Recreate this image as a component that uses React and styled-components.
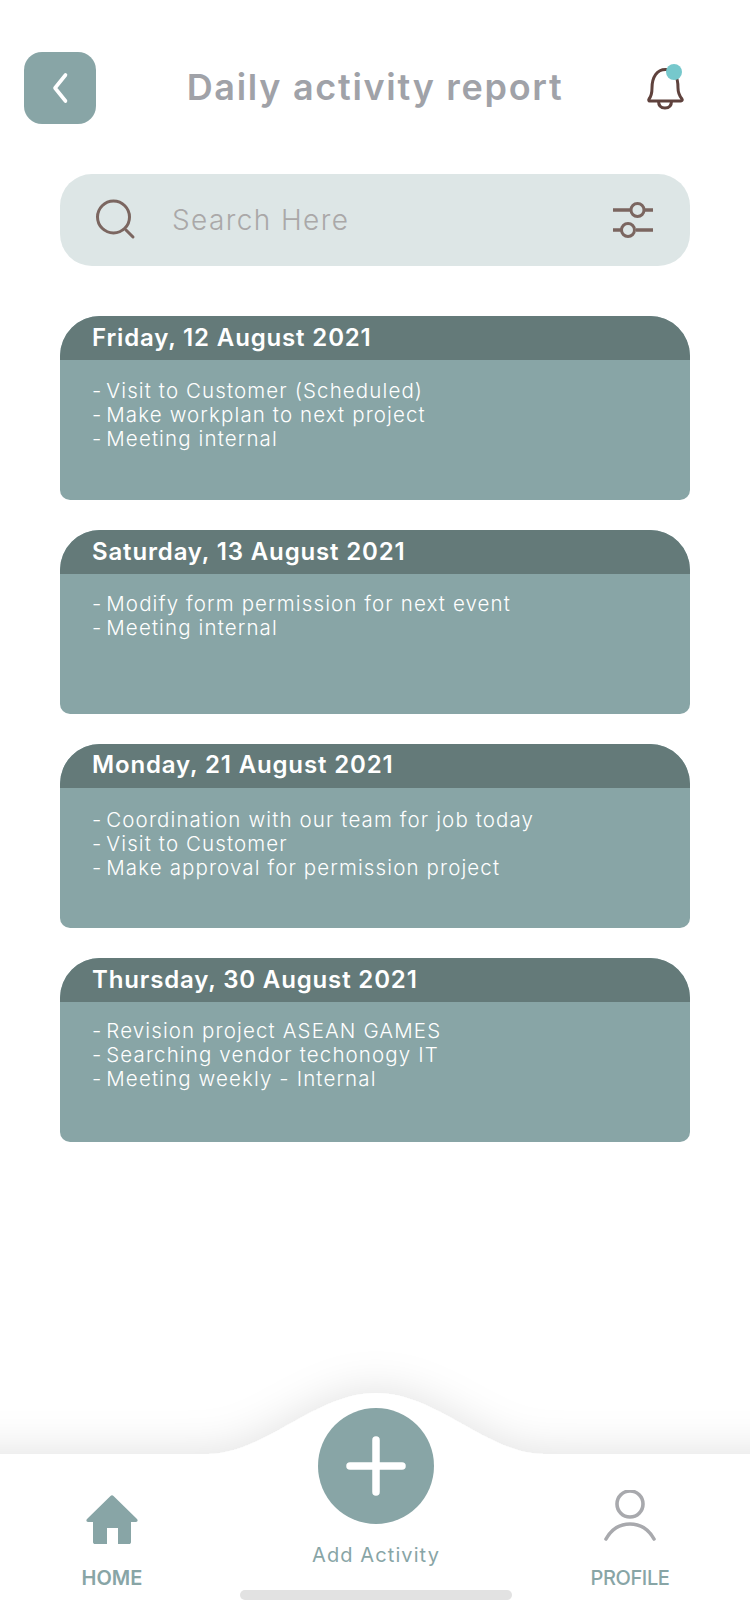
import React from "react";
import styled, { createGlobalStyle } from "styled-components";

const Global = createGlobalStyle`
  html, body { margin: 0; padding: 0; background: #fff; }
  * { box-sizing: border-box; }
`;

const FONT = `Inter, "Open Sans", "Liberation Sans", sans-serif`;
const TEAL = "#88a5a6";

const Page = styled.div`
  width: 750px;
  height: 1624px;
  display: flex;
  flex-direction: column;
  font-family: ${FONT};
  overflow: hidden;
  background: #fff;
`;
const Main = styled.main`
  flex: 1;
  padding-top: 52px;
`;
const Header = styled.header`
  display: grid;
  grid-template-columns: 110px 1fr 110px;
  align-items: center;
  height: 72px;
`;
const BackButton = styled.button`
  width: 72px;
  height: 72px;
  margin-left: 24px;
  border: 0;
  padding: 0;
  border-radius: 18px;
  background: ${TEAL};
  display: flex;
  align-items: center;
  justify-content: center;
`;
const Title = styled.h1`
  margin: 0 0 2px;
  text-align: center;
  font-size: 36px;
  font-weight: 600;
  letter-spacing: 1.7px;
  color: #a0a2a8;
`;
const BellBox = styled.div`
  width: 48px;
  height: 48px;
`;
const Search = styled.div`
  margin: 50px 60px 0;
  height: 92px;
  border-radius: 32px;
  background: #dde6e6;
  display: flex;
  align-items: center;
  padding: 0 36px 0 34px;
`;
const SearchText = styled.span`
  margin-left: 36px;
  flex: 1;
  font-size: 28px;
  font-weight: 300;
  letter-spacing: 1.4px;
  color: #aaa8a8;
`;
const Cards = styled.div`
  margin: 50px 60px 0;
  display: flex;
  flex-direction: column;
  gap: 30px;
`;
const Card = styled.article`
  height: 184px;
  border-radius: 40px 40px 10px 10px;
  background: ${TEAL};
  overflow: hidden;
  color: #fff;
`;
const CardHead = styled.div`
  height: 44px;
  padding: 0 32px ${(p) => p.$lift}px;
  display: flex;
  align-items: center;
  background: #647a79;
  font-size: 24px;
  font-weight: 600;
  letter-spacing: 0.85px;
`;
const CardBody = styled.div`
  padding: ${(p) => p.$top}px 32px 0;
  font-size: 20.5px;
  font-weight: 300;
  line-height: 24px;
  letter-spacing: 1.12px;
`;
const Line = styled.div`
  white-space: pre;
`;
const Dash = styled.span`
  word-spacing: -3px;
`;
const Footer = styled.footer`
  position: relative;
  height: 231px;
  display: grid;
  grid-template-columns: 224px 1fr 224px;
`;
const Wave = styled.svg`
  position: absolute;
  left: 0;
  top: 0;
  width: 750px;
  height: 231px;
  overflow: visible;
`;
const Side = styled.div`
  position: relative;
  padding-top: 102px;
  padding-right: ${(p) => p.$shift}px;
  display: flex;
  flex-direction: column;
  align-items: center;
  color: ${TEAL};
  font-size: 20px;
  font-weight: ${(p) => p.$weight};
  letter-spacing: ${(p) => p.$spacing}px;
`;
const SideIcon = styled.div`
  height: ${(p) => 59 + p.$raise}px;
  margin-top: ${(p) => -p.$raise}px;
  margin-bottom: 12px;
`;
const Center = styled.div`
  position: relative;
  padding: 15px 0 0 2px;
  display: flex;
  flex-direction: column;
  align-items: center;
`;
const AddButton = styled.button`
  width: 116px;
  height: 116px;
  border-radius: 50%;
  border: 0;
  padding: 0;
  background: ${TEAL};
  display: flex;
  align-items: center;
  justify-content: center;
`;
const AddLabel = styled.span`
  margin-top: 19px;
  font-size: 20px;
  letter-spacing: 1.1px;
  color: ${TEAL};
`;
const HomeBar = styled.div`
  width: 272px;
  height: 10px;
  border-radius: 5px;
  margin-top: 23px;
  background: #e2e2e2;
`;

const data = [
  { date: "Friday, 12 August 2021", lift: 2, top: 19, lines: ["Visit to Customer (Scheduled)", "Make workplan to next project", "Meeting internal"] },
  { date: "Saturday, 13 August 2021", lift: 2, top: 18, lines: ["Modify form permission for next event", "Meeting internal"] },
  { date: "Monday, 21 August 2021", lift: 4, top: 20, lines: ["Coordination with our team for job today", "Visit to Customer", "Make approval for permission project"] },
  { date: "Thursday, 30 August 2021", lift: 2, top: 17, lines: ["Revision project ASEAN GAMES", "Searching vendor techonogy IT", "Meeting weekly - Internal"] },
];

export default function App() {
  return (
    <Page>
      <Global />
      <Main>
        <Header>
          <BackButton aria-label="Back">
            <svg width="20" height="32" viewBox="0 0 20 32" fill="none">
              <path d="M15.5 3 L5 16 L15.5 29" stroke="#fff" strokeWidth="3.6" strokeLinecap="round" strokeLinejoin="round" />
            </svg>
          </BackButton>
          <Title>Daily activity report</Title>
          <BellBox>
            <svg width="48" height="48" viewBox="0 0 48 48" fill="none">
              <path d="M9.5 37 C9 37 8.3 36 9 35 C11.5 32 12 29 12 24 C12 13 17 5.5 25.5 5.5 C34 5.5 38 13 38 24 C38 29 39.5 32 42 35 C42.7 36 42 37 41 37 Z" stroke="#5f423d" strokeWidth="3" strokeLinejoin="round" />
              <path d="M18.5 37 C18.5 41.5 21 44 25 44 C29 44 31.5 41.5 31.5 37" stroke="#5f423d" strokeWidth="3" />
              <circle cx="34" cy="8" r="8" fill="#76c8cc" />
            </svg>
          </BellBox>
        </Header>
        <Search>
          <svg width="42" height="42" viewBox="0 0 42 42" fill="none">
            <circle cx="19.5" cy="18" r="16" stroke="#7b6660" strokeWidth="3" />
            <path d="M32 31 L39 38" stroke="#7b6660" strokeWidth="3" strokeLinecap="round" />
          </svg>
          <SearchText>Search Here</SearchText>
          <svg width="42" height="40" viewBox="0 0 42 40" fill="none">
            <path d="M1 10 H18 M33 10 H41 M1 30 H9 M24 30 H41" stroke="#7b6660" strokeWidth="3.4" />
            <circle cx="25.5" cy="10" r="6.5" stroke="#7b6660" strokeWidth="3" />
            <circle cx="16" cy="30" r="6.5" stroke="#7b6660" strokeWidth="3" />
          </svg>
        </Search>
        <Cards>
          {data.map((c) => (
            <Card key={c.date}>
              <CardHead $lift={c.lift}>{c.date}</CardHead>
              <CardBody $top={c.top}>
                {c.lines.map((l) => (
                  <Line key={l}>
                    <Dash>- </Dash>
                    {l}
                  </Line>
                ))}
              </CardBody>
            </Card>
          ))}
        </Cards>
      </Main>
      <Footer>
        <Wave viewBox="0 0 750 231" fill="none">
          <defs>
            <filter id="waveShadow" x="-10%" y="-60%" width="120%" height="220%">
              <feDropShadow dx="0" dy="-4" stdDeviation="20" floodColor="#000" floodOpacity="0.11" />
            </filter>
          </defs>
          <path
            d="M-60 61 H208 C265 61 315 0 376 0 C437 0 487 61 544 61 H810 V300 H-60 Z"
            fill="#fff"
            filter="url(#waveShadow)"
          />
        </Wave>
        <Side $shift={0} $weight={600} $spacing={0}>
          <SideIcon $raise={0}>
            <svg width="52" height="50" viewBox="0 0 52 50" fill="#88a5a6">
              <path d="M24.5 1 C25.5 0 26.5 0 27.5 1 L51 24 C52.2 25.5 51.5 27 50 27 H45 V47 C45 48.5 44 49 43 49 H32 V33 H21 V49 H9 C8 49 7 48.5 7 47 V27 H2 C0.5 27 -0.2 25.5 1 24 Z" />
            </svg>
          </SideIcon>
          HOME
        </Side>
        <Center>
          <AddButton aria-label="Add Activity">
            <svg width="60" height="60" viewBox="0 0 60 60">
              <path d="M30 4 V56 M4 30 H56" stroke="#fff" strokeWidth="7.5" strokeLinecap="round" />
            </svg>
          </AddButton>
          <AddLabel>Add Activity</AddLabel>
          <HomeBar />
        </Center>
        <Side $shift={16} $weight={500} $spacing={-0.4}>
          <SideIcon $raise={5}>
            <svg width="52" height="52" viewBox="0 0 52 52" fill="none">
              <circle cx="26" cy="14" r="13" stroke="#a8a9ad" strokeWidth="3.6" />
              <path d="M2 49 C7 40 15 34 26 34 C37 34 45 40 50 49" stroke="#a8a9ad" strokeWidth="3.6" strokeLinecap="round" />
            </svg>
          </SideIcon>
          PROFILE
        </Side>
      </Footer>
    </Page>
  );
}
